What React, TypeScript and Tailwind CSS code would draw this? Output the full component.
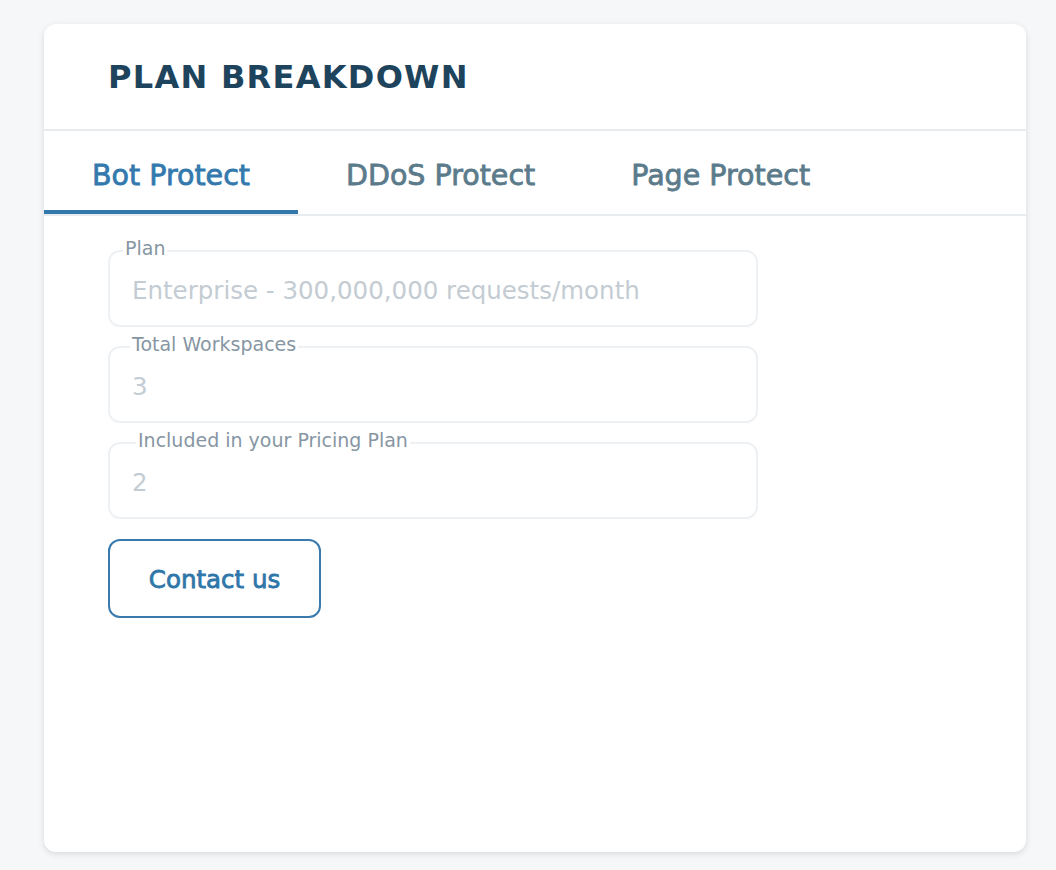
import React, { useState } from "react";

const tabs = ["Bot Protect", "DDoS Protect", "Page Protect"];

const fields = [
  { label: "Plan", value: "Enterprise - 300,000,000 requests/month", offset: "left-[13px]" },
  { label: "Total Workspaces", value: "3", offset: "left-[20px]" },
  { label: "Included in your Pricing Plan", value: "2", offset: "left-[26px]" },
];

export default function App() {
  const [active, setActive] = useState(0);

  return (
    <div
      className="min-h-screen bg-[#f6f7f9] pt-6 pl-11 pr-[30px] pb-[18px]"
      style={{ fontFamily: "'DejaVu Sans', 'Open Sans', sans-serif" }}
    >
      <div className="h-[828px] w-[982px] rounded-xl bg-white shadow-[0_2px_6px_rgba(0,0,0,0.12)]">
        {/* header */}
        <div className="h-[107px] border-b-2 border-[#e8ecef] pl-16 flex items-center">
          <h1 className="text-[32px] font-bold tracking-[0.04em] text-[#1e445d]">
            PLAN BREAKDOWN
          </h1>
        </div>

        {/* tabs */}
        <div className="flex border-b-2 border-[#e8ecef]">
          {tabs.map((t, i) => (
            <button
              key={t}
              onClick={() => setActive(i)}
              className={
                i === active
                  ? "h-[83px] px-12 pt-[11px] text-[28.5px] text-[#3479ad] [-webkit-text-stroke:0.8px_#3479ad] border-b-4 border-[#3479ad]"
                  : "h-[83px] px-12 pt-[11px] text-[28.5px] text-[#5b7b8b] [-webkit-text-stroke:0.8px_#5b7b8b] border-b-4 border-transparent"
              }
            >
              {t}
            </button>
          ))}
        </div>

        {/* fields */}
        <div className="pl-16 pt-[34px] flex flex-col gap-[19px] w-[714px]">
          {fields.map((f) => (
            <div
              key={f.label}
              className="relative h-[77px] rounded-xl border-2 border-[#eef1f3] flex items-center pl-[22px]"
            >
              <span
                className={`absolute ${f.offset} -top-[16px] bg-white px-[2px] text-[19px] leading-[24px] text-[#8796a3]`}
              >
                {f.label}
              </span>
              <span className="text-[24.5px] text-[#c4ccd3] pt-[6px]">{f.value}</span>
            </div>
          ))}

          <button className="mt-[1px] h-[79px] w-[213px] rounded-xl border-2 border-[#3a7aad] pt-[4px] text-[24.5px] text-[#2f76a9] [-webkit-text-stroke:0.8px_#2f76a9]">
            Contact us
          </button>
        </div>
      </div>
    </div>
  );
}
